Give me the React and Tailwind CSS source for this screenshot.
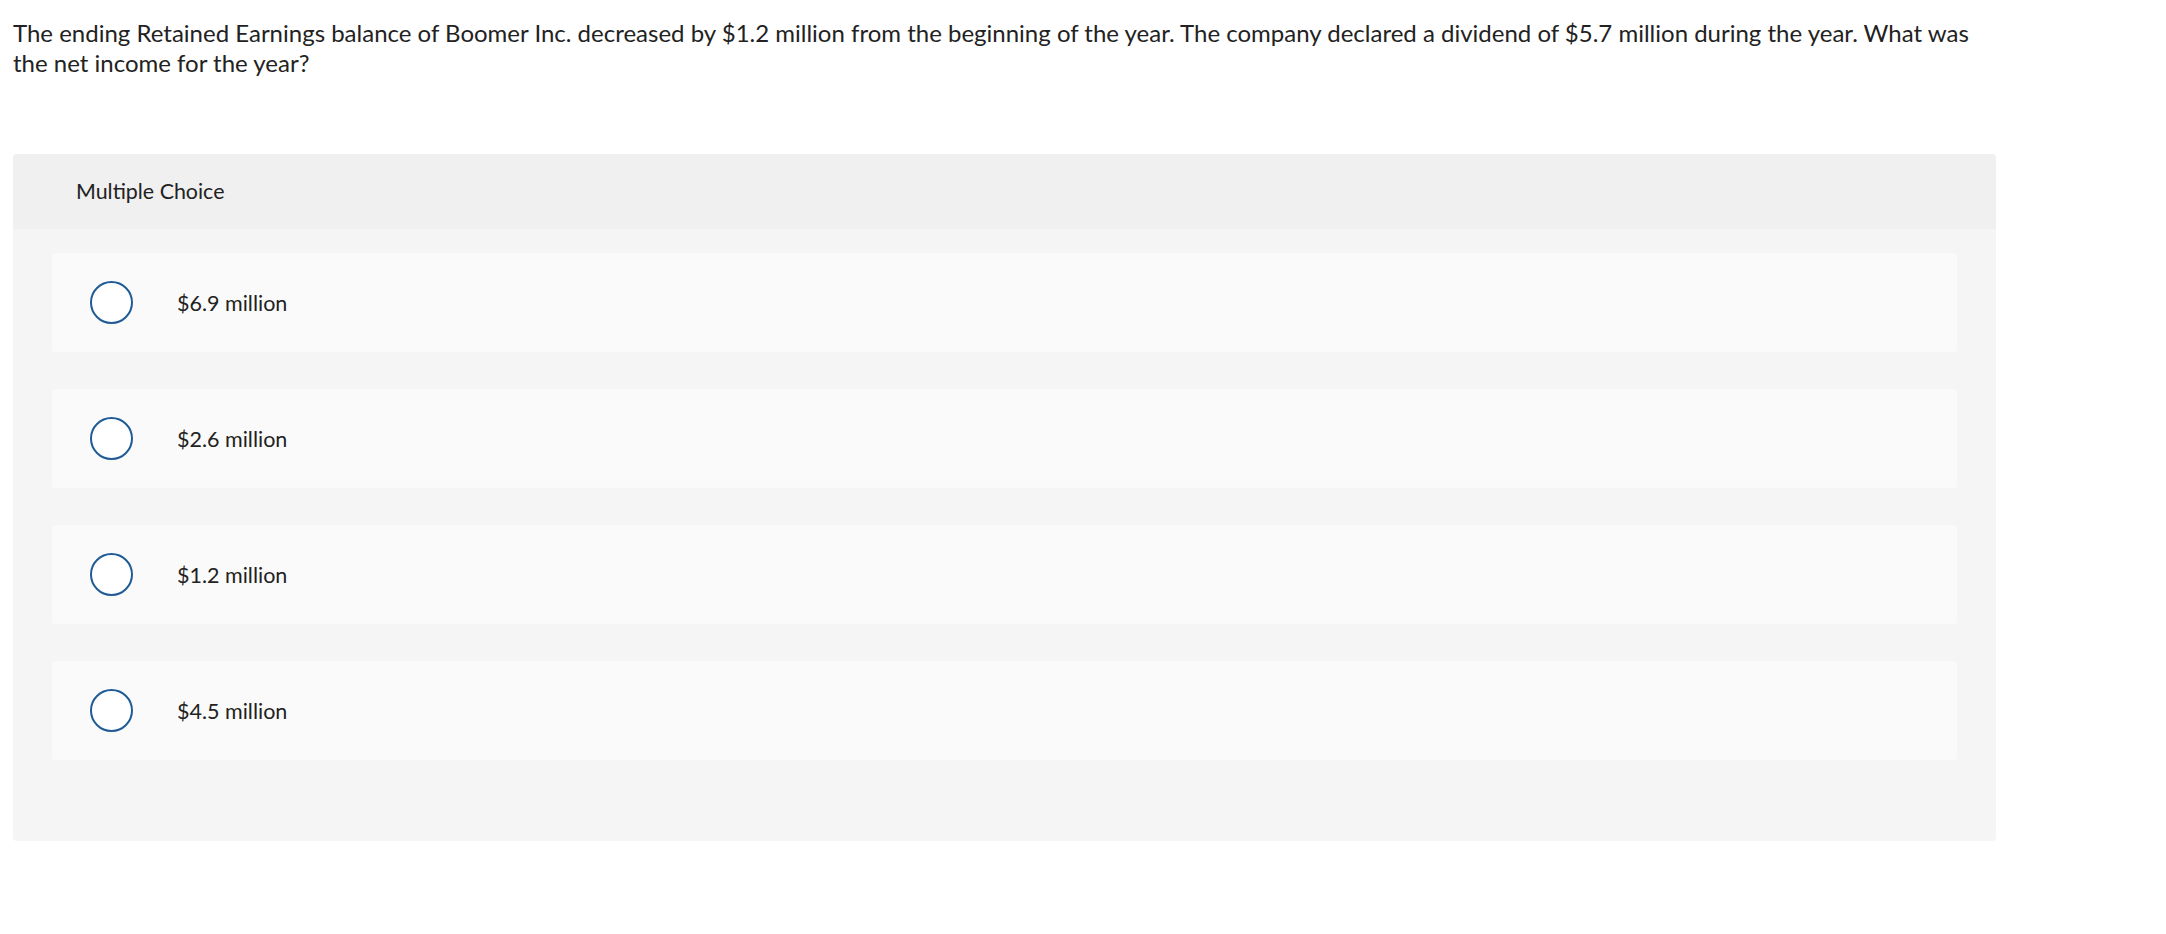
const options = ["$6.9 million", "$2.6 million", "$1.2 million", "$4.5 million"];

const App = () => {
  return (
    <div className="min-h-screen bg-white pl-[13px] pt-[18px] text-[#222]" style={{ fontFamily: "Lato, 'Open Sans', sans-serif" }}>
      <p className="w-[1975px] text-[24px] leading-[30px]">
        The ending Retained Earnings balance of Boomer Inc. decreased by $1.2 million from the beginning of the year. The company declared a dividend of $5.7 million during the year. What was the net income for the year?
      </p>
      <div className="mt-[76px] w-[1983px] rounded bg-[#f5f5f5]">
        <div className="flex h-[75px] items-center rounded-t bg-[#f0f0f0] pl-[63px] text-[21.4px]">
          Multiple Choice
        </div>
        <div className="flex flex-col gap-[37px] px-[39px] pt-[24px] pb-[81px]">
          {options.map((opt) => (
            <label key={opt} className="flex h-[99px] items-center gap-[44px] rounded bg-[#fafafa] pl-[38px]">
              <span className="h-[43px] w-[43px] rounded-full border-2 border-[#1f5b95] bg-white" />
              <span className="pt-[2px] text-[21.5px]">{opt}</span>
            </label>
          ))}
        </div>
      </div>
    </div>
  );
};

export default App;
